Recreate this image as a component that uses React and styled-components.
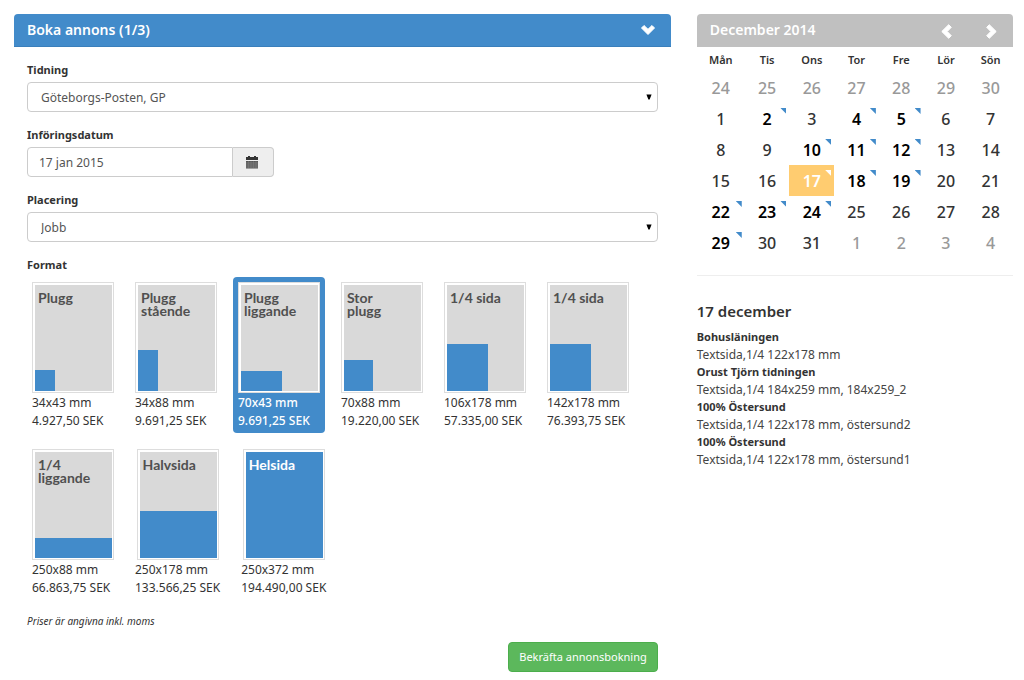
import { useState } from 'react'
import styled, { createGlobalStyle } from 'styled-components'

const colors = {
  primary: '#428bca',
  primaryBorder: '#3a7fbb',
  success: '#5cb85c',
  successBorder: '#4cae4c',
  text: '#333333',
  muted: '#555555',
  faded: '#999999',
  border: '#cccccc',
  headerGrey: '#c0c0c0',
  paper: '#d9d9d9',
  highlight: '#ffcc70',
}

const GlobalStyle = createGlobalStyle`
  * {
    box-sizing: border-box;
  }

  body {
    margin: 0;
    background: #ffffff;
    color: ${colors.text};
    font-family: 'Noto Sans', 'Open Sans', sans-serif;
    font-size: 12px;
    line-height: 18px;
  }

  button, input, select {
    font: inherit;
  }
`

const Page = styled.main`
  display: grid;
  grid-template-columns: 27fr 13fr;
  column-gap: 26px;
  align-items: start;
  padding: 14px 11px 8px 14px;
`

const PanelHeader = styled.header`
  display: flex;
  align-items: center;
  justify-content: space-between;
  height: 33px;
  padding: 0 16px 0 13px;
  border-radius: 4px 4px 0 0;
  background: ${({ $tone }) => ($tone === 'grey' ? colors.headerGrey : colors.primary)};
  border-bottom: 1px solid ${({ $tone }) => ($tone === 'grey' ? colors.headerGrey : colors.primaryBorder)};
  color: #ffffff;
`

const PanelTitle = styled.h2`
  margin: 0;
  font-size: 14px;
  font-weight: 600;
`

const IconButton = styled.button`
  display: flex;
  padding: 0;
  border: 0;
  background: none;
  color: inherit;
  cursor: pointer;
`

const MonthNav = styled.nav`
  display: flex;
  gap: 34px;
  padding-top: 3px;
`

const Form = styled.form`
  padding: 14px 13px 0;
`

const Field = styled.div`
  margin-bottom: 14px;
`

const Label = styled.label`
  display: block;
  margin-bottom: 3px;
  font-size: 11px;
  font-weight: 700;
`

const FormatGroup = styled.fieldset`
  min-width: 0;
  margin: 0;
  padding: 0;
  border: 0;
`

const Legend = styled(Label).attrs({ as: 'legend' })`
  padding: 0;
`

const SelectWrapper = styled.div`
  display: grid;
  align-items: center;

  & > * {
    grid-area: 1 / 1;
  }

  & > svg {
    justify-self: end;
    margin-right: 6px;
    pointer-events: none;
  }
`

const Select = styled.select`
  width: 100%;
  height: 30px;
  padding: 2px 24px 0 13px;
  border: 1px solid ${colors.border};
  border-radius: 4px;
  background: #ffffff;
  color: ${colors.muted};
  appearance: none;
`

const InputGroup = styled.div`
  display: flex;
  max-width: 247px;
  height: 30px;
`

const DateInput = styled.input`
  flex: 1;
  min-width: 0;
  padding: 2px 11px 0;
  border: 1px solid ${colors.border};
  border-radius: 4px 0 0 4px;
  color: ${colors.muted};
`

const DateButton = styled.button`
  display: flex;
  align-items: center;
  justify-content: center;
  width: 41px;
  padding: 0 2px 0 0;
  border: 1px solid ${colors.border};
  border-left: 0;
  border-radius: 0 4px 4px 0;
  background: #eeeeee;
  color: ${colors.text};
  cursor: pointer;
`

const FormatList = styled.div`
  display: flex;
  flex-wrap: wrap;
  gap: 11px;
`

const FormatCard = styled.button`
  display: flex;
  flex-direction: column;
  align-items: stretch;
  padding: 5px 5px 4px;
  border: 0;
  border-radius: 4px;
  background: ${({ $selected }) => ($selected ? colors.primary : 'transparent')};
  color: ${({ $selected }) => ($selected ? '#ffffff' : colors.text)};
  font-weight: ${({ $selected }) => ($selected ? 500 : 400)};
  text-align: left;
  cursor: pointer;
`

const Sheet = styled.span`
  display: block;
  align-self: center;
  width: 82px;
  height: 111px;
  padding: 2px 1px 1px 2px;
  border: 1px solid #dddddd;
  background: #ffffff;
`

const Paper = styled.span`
  display: flex;
  flex-direction: column;
  justify-content: space-between;
  height: 100%;
  background: ${({ $full }) => ($full ? colors.primary : colors.paper)};
  color: ${({ $full }) => ($full ? '#ffffff' : '#505050')};
`

const PaperName = styled.span`
  padding: 6px 3px 0;
  font-family: Lato, 'Noto Sans', sans-serif;
  font-size: 14px;
  font-weight: 700;
  line-height: 13px;
  white-space: pre-line;
`

const AdArea = styled.span`
  display: block;
  background: ${colors.primary};
`

const Size = styled.span`
  line-height: 19px;
`

const Price = styled.span`
  line-height: 17px;
  white-space: nowrap;
`

const Note = styled.p`
  margin: 12px 0;
  font-size: 10px;
  font-style: italic;
`

const Actions = styled.div`
  display: flex;
  justify-content: flex-end;
`

const SubmitButton = styled.button`
  height: 30px;
  padding: 0 10px;
  border: 1px solid ${colors.successBorder};
  border-radius: 4px;
  background: ${colors.success};
  color: #ffffff;
  font-size: 11px;
  cursor: pointer;
`

const Calendar = styled.table`
  width: 100%;
  table-layout: fixed;
  border-collapse: collapse;
  text-align: center;
`

const Weekday = styled.th`
  height: 25px;
  padding: 0;
  font-size: 11px;
  font-weight: 600;

  &:first-child {
    width: 48px;
  }
`

const dayColor = ({ $outside, $booked, $selected }) => {
  if ($selected) return '#ffffff'
  if ($outside) return colors.faded
  return $booked ? '#000000' : colors.text
}

const Day = styled.td`
  position: relative;
  height: 31px;
  padding: 0;
  background: ${({ $selected }) => ($selected ? colors.highlight : 'transparent')};
  color: ${dayColor};
  font-size: 16px;
  font-weight: ${({ $booked }) => ($booked ? 600 : 500)};
`

const Corner = styled.span`
  position: absolute;
  top: 5px;
  right: 3px;
  width: 6px;
  height: 6px;
  background: ${({ $selected }) => ($selected ? '#ffffff' : colors.primary)};
  clip-path: polygon(0 0, 100% 0, 100% 100%);
`

const DayDetails = styled.section`
  margin-top: 17px;
  padding-top: 25px;
  border-top: 1px solid #eeeeee;
`

const DayTitle = styled.h3`
  margin: 0 0 7px;
  font-size: 15px;
  font-weight: 600;
  line-height: 20px;
`

const BookingList = styled.dl`
  margin: 0;
`

const PaperTitle = styled.dt`
  font-size: 11px;
  font-weight: 700;
`

const Booking = styled.dd`
  margin: 0;
  color: #444444;
  line-height: 17px;
`

const formats = [
  { name: 'Plugg', size: '34x43 mm', price: '4.927,50 SEK', width: 20, height: 21 },
  { name: 'Plugg\nstående', size: '34x88 mm', price: '9.691,25 SEK', width: 20, height: 41 },
  { name: 'Plugg\nliggande', size: '70x43 mm', price: '9.691,25 SEK', width: 41, height: 20 },
  { name: 'Stor\nplugg', size: '70x88 mm', price: '19.220,00 SEK', width: 29, height: 31 },
  { name: '1/4 sida', size: '106x178 mm', price: '57.335,00 SEK', width: 41, height: 47 },
  { name: '1/4 sida', size: '142x178 mm', price: '76.393,75 SEK', width: 41, height: 47 },
  { name: '1/4\nliggande', size: '250x88 mm', price: '66.863,75 SEK', width: '100%', height: 20 },
  { name: 'Halvsida', size: '250x178 mm', price: '133.566,25 SEK', width: '100%', height: 47 },
  { name: 'Helsida', size: '250x372 mm', price: '194.490,00 SEK', full: true },
]

const weekdays = ['Mån', 'Tis', 'Ons', 'Tor', 'Fre', 'Lör', 'Sön']

const weeks = [
  [24, 25, 26, 27, 28, 29, 30],
  [1, 2, 3, 4, 5, 6, 7],
  [8, 9, 10, 11, 12, 13, 14],
  [15, 16, 17, 18, 19, 20, 21],
  [22, 23, 24, 25, 26, 27, 28],
  [29, 30, 31, 1, 2, 3, 4],
]

const bookedDays = [2, 4, 5, 10, 11, 12, 17, 18, 19, 22, 23, 24, 29]
const selectedDay = 17

const bookings = [
  { paper: 'Bohusläningen', ad: 'Textsida,1/4 122x178 mm' },
  { paper: 'Orust Tjörn tidningen', ad: 'Textsida,1/4 184x259 mm, 184x259_2' },
  { paper: '100% Östersund', ad: 'Textsida,1/4 122x178 mm, östersund2' },
  { paper: '100% Östersund', ad: 'Textsida,1/4 122x178 mm, östersund1' },
]

function isOutside(day, week) {
  return (week === 0 && day > 7) || (week === 5 && day < 7)
}

const chevrons = {
  down: { width: 14, height: 10, points: '0.5,3 3,0.5 7,4.3 11,0.5 13.5,3 7,9.5' },
  left: { width: 11, height: 15, points: '7.7,0.7 10.3,3.3 6.2,7.5 10.3,11.7 7.7,14.3 0.8,7.5' },
  right: { width: 11, height: 15, points: '3.3,0.7 0.7,3.3 4.8,7.5 0.7,11.7 3.3,14.3 10.2,7.5' },
}

function Chevron({ direction }) {
  const { width, height, points } = chevrons[direction]
  return (
    <svg width={width} height={height} viewBox={`0 0 ${width} ${height}`} aria-hidden="true">
      <polygon points={points} fill="currentColor" stroke="currentColor" strokeLinejoin="round" />
    </svg>
  )
}

function CalendarIcon() {
  return (
    <svg width="12" height="13" viewBox="0 0 12 13" aria-hidden="true">
      <path d="M0 1h2V0h2v1h4V0h2v1h2v3H0z" fill="currentColor" />
      <path d="M0 5h12v7.5H0z" fill="#555555" />
      <path d="M0 7h12M0 9h12M0 11h12" stroke="#999999" strokeWidth="0.6" />
      <path d="M2.5 5v7M5 5v7M7.5 5v7M10 5v7" stroke="#888888" strokeWidth="0.4" />
    </svg>
  )
}

function Dropdown({ id, value }) {
  return (
    <SelectWrapper>
      <Select id={id} defaultValue={value}>
        <option>{value}</option>
      </Select>
      <svg width="6" height="6" viewBox="0 0 6 6" aria-hidden="true">
        <path d="M0.4 0.5h5.2L3.6 5.6H2.4z" fill="#000000" />
      </svg>
    </SelectWrapper>
  )
}

function BookingForm() {
  const [selected, setSelected] = useState(2)

  return (
    <section>
      <PanelHeader>
        <PanelTitle>Boka annons (1/3)</PanelTitle>
        <IconButton type="button" aria-label="Dölj">
          <Chevron direction="down" />
        </IconButton>
      </PanelHeader>
      <Form onSubmit={(e) => e.preventDefault()}>
        <Field>
          <Label htmlFor="tidning">Tidning</Label>
          <Dropdown id="tidning" value="Göteborgs-Posten, GP" />
        </Field>
        <Field>
          <Label htmlFor="datum">Införingsdatum</Label>
          <InputGroup>
            <DateInput id="datum" type="text" defaultValue="17 jan 2015" />
            <DateButton type="button" aria-label="Välj datum">
              <CalendarIcon />
            </DateButton>
          </InputGroup>
        </Field>
        <Field>
          <Label htmlFor="placering">Placering</Label>
          <Dropdown id="placering" value="Jobb" />
        </Field>
        <FormatGroup>
          <Legend>Format</Legend>
          <FormatList>
            {formats.map((format, index) => (
              <FormatCard
                key={format.size}
                type="button"
                aria-pressed={index === selected}
                $selected={index === selected}
                onClick={() => setSelected(index)}
              >
                <Sheet>
                  <Paper $full={format.full}>
                    <PaperName>{format.name}</PaperName>
                    {!format.full && <AdArea style={{ width: format.width, height: format.height }} />}
                  </Paper>
                </Sheet>
                <Size>{format.size}</Size>
                <Price>{format.price}</Price>
              </FormatCard>
            ))}
          </FormatList>
        </FormatGroup>
        <Note>Priser är angivna inkl. moms</Note>
        <Actions>
          <SubmitButton type="submit">Bekräfta annonsbokning</SubmitButton>
        </Actions>
      </Form>
    </section>
  )
}

function MonthCalendar() {
  return (
    <section>
      <PanelHeader $tone="grey">
        <PanelTitle>December 2014</PanelTitle>
        <MonthNav>
          <IconButton type="button" aria-label="Föregående månad">
            <Chevron direction="left" />
          </IconButton>
          <IconButton type="button" aria-label="Nästa månad">
            <Chevron direction="right" />
          </IconButton>
        </MonthNav>
      </PanelHeader>
      <Calendar>
        <thead>
          <tr>
            {weekdays.map((name) => (
              <Weekday key={name} scope="col">{name}</Weekday>
            ))}
          </tr>
        </thead>
        <tbody>
          {weeks.map((days, week) => (
            <tr key={week}>
              {days.map((day) => {
                const outside = isOutside(day, week)
                const booked = !outside && bookedDays.includes(day)
                const selected = !outside && day === selectedDay
                return (
                  <Day key={day} $outside={outside} $booked={booked} $selected={selected}>
                    {day}
                    {booked && <Corner $selected={selected} />}
                  </Day>
                )
              })}
            </tr>
          ))}
        </tbody>
      </Calendar>
      <DayDetails>
        <DayTitle>17 december</DayTitle>
        <BookingList>
          {bookings.map(({ paper, ad }) => (
            <div key={ad}>
              <PaperTitle>{paper}</PaperTitle>
              <Booking>{ad}</Booking>
            </div>
          ))}
        </BookingList>
      </DayDetails>
    </section>
  )
}

function App() {
  return (
    <>
      <GlobalStyle />
      <Page>
        <BookingForm />
        <MonthCalendar />
      </Page>
    </>
  )
}

export default App
